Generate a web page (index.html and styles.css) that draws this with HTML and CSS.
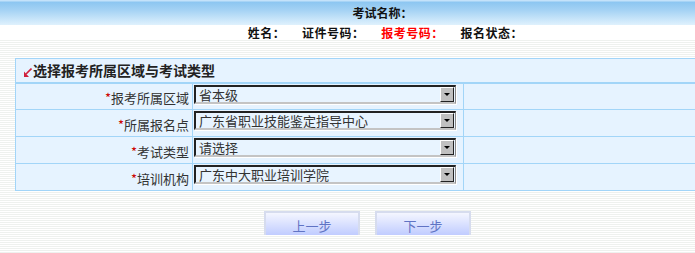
FILE: index.html
```html
<html>
<head>
<meta charset="utf-8">
<link rel="stylesheet" href="styles.css">
</head>
<body>
<div class="page">
<div class="head">考试名称：</div>
<div class="info">
<span>姓名：</span>
<span>证件号码：</span>
<span class="red">报考号码：</span>
<span>报名状态：</span>
</div>

<div class="main">
<table class="form">
<tr class="top">
<td class="title" colspan="3">
<svg class="arrow" width="8" height="9" viewBox="0 0 8 9"><path d="M7.5 0.5 L2 6" stroke="#d0203c" stroke-width="1.6"/><path d="M0 3.5 L0 9 L5 9 Z" fill="#d0203c"/></svg>选择报考所属区域与考试类型
</td>
</tr>
<tr>
<td class="lbl"><i>*</i>报考所属区域</td>
<td class="fld"><div class="sel"><span class="val">省本级</span><span class="btn"></span></div></td>
<td></td>
</tr>
<tr>
<td class="lbl"><i>*</i>所属报名点</td>
<td class="fld"><div class="sel"><span class="val">广东省职业技能鉴定指导中心</span><span class="btn"></span></div></td>
<td></td>
</tr>
<tr>
<td class="lbl"><i>*</i>考试类型</td>
<td class="fld"><div class="sel"><span class="val">请选择</span><span class="btn"></span></div></td>
<td></td>
</tr>
<tr>
<td class="lbl"><i>*</i>培训机构</td>
<td class="fld"><div class="sel"><span class="val">广东中大职业培训学院</span><span class="btn"></span></div></td>
<td></td>
</tr>
</table>

<div class="actions">
<button class="step">上一步</button>
<button class="step">下一步</button>
</div>
</div>
</div>
</body>
</html>
```

FILE: styles.css
```css
html{
overflow:hidden;
}
body{
margin:0; font-family:"Noto Sans CJK SC", "DejaVu Sans", sans-serif; font-size:12px; color:#222;
}
.page{
width:765px;
}
.head{
height:25px; line-height:26px; text-align:center; font-weight:bold; color:#111;
background:linear-gradient(#c4e2fa 0, #c4e2fa 1px, #8cc6f1 2px, #a4d2f4 10px, #dff1fd 25px);
}
.info{
height:14px; line-height:16px; text-align:center; font-weight:bold; color:#111; background:#fff; padding-left:6px;
}
.info span{
margin:0 7px; letter-spacing:0.5px;
}
.info .red{
color:#f00;
}
.main{
background:repeating-linear-gradient(#ffffff 0 1px, #eef1ee 1px 2px);
padding:19px 0 20px 15px;
}
.form{
border-collapse:collapse; width:735px; background:#e6f3ff;
}
.form tr{
height:27px;
}
.form tr.top{
height:24px;
}
.form td{
border:1px solid #a2d5f8; padding:0;
}
.form .title{
border-bottom:2px solid #a2d5f8; font-size:14px; font-weight:bold; color:#222; padding-left:8px; line-height:20px; padding-bottom:1px;
}
.arrow{
margin-right:1px; vertical-align:-1px;
}
.form .lbl{
width:173px; text-align:right; padding-right:3px; font-size:13px; color:#333; line-height:14px; padding-top:3px;
}
.lbl i{
font-style:normal; color:#c00;
}
.form .fld{
width:269px; padding-left:1px; vertical-align:top; padding-top:1px;
}
.sel{
display:flex; width:259px; height:15px; border-top:2px solid #222; border-left:2px solid #222; border-right:1px solid #888; border-bottom:2px solid #c4c4c4; box-shadow:1px 1px 0 #fff; background:#e8f4ff;
}
.val{
flex:1; padding-left:3px; font-size:13px; line-height:16px; color:#333; white-space:nowrap;
}
.btn{
width:12px; height:13px; margin:0 1px 0 0; background:#c0c0c0; border:1px solid; border-color:#fff #222 #222 #fff; position:relative;
}
.btn::after{
content:""; position:absolute; left:3px; top:5px; border-left:3px solid transparent; border-right:3px solid transparent; border-top:3px solid #000;
}
.actions{
display:flex; gap:15px; padding-left:249px; margin-top:20px;
}
.step{
width:96px; height:24px; border:2px solid #d6dcee; border-bottom:0; background:linear-gradient(#f4f6ff, #c0ccff); font-family:"Noto Sans CJK SC", sans-serif; font-size:13px; color:#6074c4; padding:2px 0 0 0;
}
```
